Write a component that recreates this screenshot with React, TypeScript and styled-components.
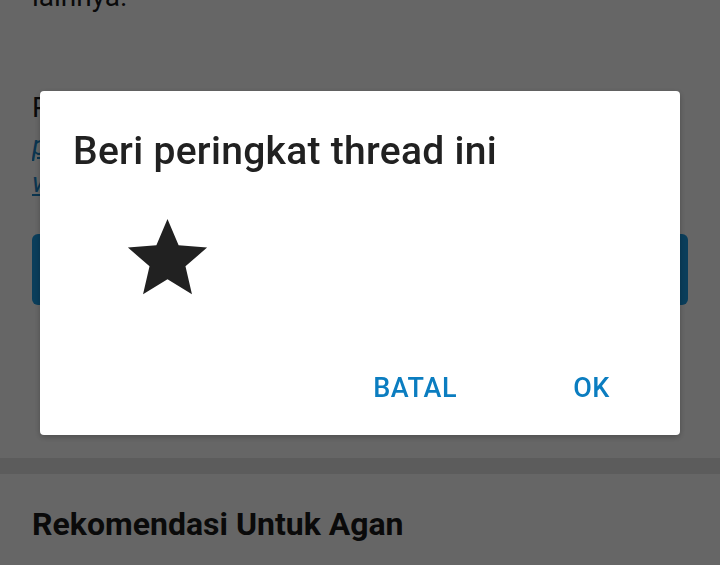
import React from "react";
import styled, { createGlobalStyle } from "styled-components";

const Global = createGlobalStyle`
  html, body { margin: 0; padding: 0; background: #ffffff; }
  body { font-family: Roboto, "Noto Sans", "Liberation Sans", sans-serif; overflow: hidden; }
  #root { width: 720px; height: 565px; overflow: hidden; position: relative; }
`;

const Page = styled.div`
  width: 720px;
  height: 565px;
  background: #ffffff;
  color: #1a1a1a;
`;

const Section = styled.div`
  padding: 0 32px;
`;

const Paragraph = styled.p<{ $top?: number }>`
  margin: ${(p) => p.$top ?? 0}px 0 0;
  font-size: 28px;
  line-height: 34px;
`;

const InfoBlock = styled.div`
  margin-top: 75px;
  font-size: 28px;
  line-height: 37.5px;
`;

const Line = styled.div`
  white-space: nowrap;
  overflow: hidden;
`;

const Link = styled.a`
  color: #1c86c8;
  text-decoration: underline;
  font-style: italic;
`;

const PrimaryButton = styled.div`
  margin-top: 32px;
  height: 71px;
  border-radius: 6px;
  background: #1a9be4;
`;

const Divider = styled.div`
  margin-top: 153px;
  height: 16px;
  background: #e6e6e6;
`;

const SectionTitle = styled.h2`
  margin: 32px 0 0;
  font-size: 32px;
  line-height: 36px;
  font-weight: 700;
  color: #1a1a1a;
`;

const Overlay = styled.div`
  position: fixed;
  inset: 0;
  background: rgba(0, 0, 0, 0.6);
  display: flex;
  justify-content: center;
  align-items: flex-start;
  padding-top: 91px;
`;

const Dialog = styled.div`
  width: 640px;
  height: 344px;
  box-sizing: border-box;
  background: #ffffff;
  border-radius: 4px;
  box-shadow: 0 2px 6px rgba(0, 0, 0, 0.25);
  padding: 38px 0 0 33px;
  display: flex;
  flex-direction: column;
`;

const Title = styled.h1`
  margin: 0;
  font-size: 39px;
  line-height: 44px;
  font-weight: 500;
  color: #212121;
  letter-spacing: 0.3px;
`;

const StarWrap = styled.div`
  margin: 38px 0 0 47px;
  width: 95px;
  height: 95px;
  color: #212121;
`;

const Actions = styled.div`
  margin-top: 66px;
  display: flex;
  justify-content: flex-end;
  gap: 116px;
  padding-right: 70px;
`;

const ActionButton = styled.button`
  border: none;
  background: none;
  padding: 0;
  font-family: inherit;
  font-size: 27px;
  line-height: 32px;
  font-weight: 500;
  color: #0b7dc0;
  letter-spacing: 0.6px;
  cursor: pointer;
`;

function Star() {
  return (
    <svg width="95" height="95" viewBox="0 0 24 24" fill="currentColor">
      <path d="M12 17.27L18.18 21l-1.64-7.03L22 9.24l-7.19-.61L12 2 9.19 8.63 2 9.24l5.46 4.73L5.82 21z" />
    </svg>
  );
}

export default function App() {
  return (
    <>
      <Global />
      <Page>
        <Section>
          <Paragraph $top={-20}>lainnya.</Paragraph>
          <InfoBlock>
            <Line>Pelajari</Line>
            <Line>
              <Link>panduan</Link>
            </Line>
            <Line>
              <Link>www</Link>
            </Line>
          </InfoBlock>
          <PrimaryButton />
        </Section>
        <Divider />
        <Section>
          <SectionTitle>Rekomendasi Untuk Agan</SectionTitle>
        </Section>
      </Page>
      <Overlay>
        <Dialog>
          <Title>Beri peringkat thread ini</Title>
          <StarWrap>
            <Star />
          </StarWrap>
          <Actions>
            <ActionButton>BATAL</ActionButton>
            <ActionButton>OK</ActionButton>
          </Actions>
        </Dialog>
      </Overlay>
    </>
  );
}
